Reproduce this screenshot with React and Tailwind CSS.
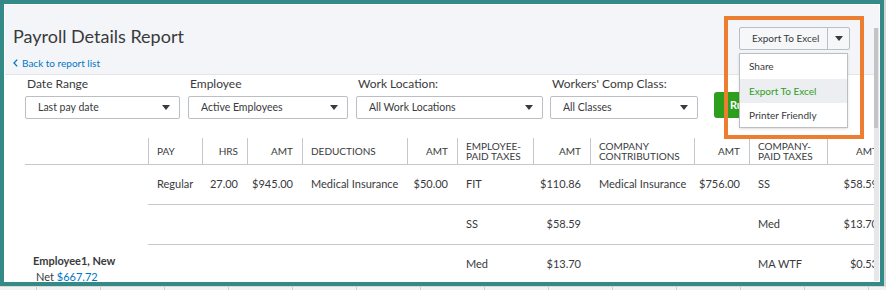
import React from 'react';

const filters = [
  { label: 'Date Range', value: 'Last pay date', width: 'w-[155px]' },
  { label: 'Employee', value: 'Active Employees', width: 'w-[160px]' },
  { label: 'Work Location:', value: 'All Work Locations', width: 'w-[187px]' },
  { label: "Workers' Comp Class:", value: 'All Classes', width: 'w-[148px]' },
];

const columns = [
  { label: 'PAY', align: 'left' },
  { label: 'HRS', align: 'right' },
  { label: 'AMT', align: 'right' },
  { label: 'DEDUCTIONS', align: 'left' },
  { label: 'AMT', align: 'right' },
  { label: ['EMPLOYEE-', 'PAID TAXES'], align: 'left' },
  { label: 'AMT', align: 'right' },
  { label: ['COMPANY', 'CONTRIBUTIONS'], align: 'left' },
  { label: 'AMT', align: 'right' },
  { label: ['COMPANY-', 'PAID TAXES'], align: 'left' },
  { label: 'AMT', align: 'right' },
];

const rows = [
  ['Regular', '27.00', '$945.00', 'Medical Insurance', '$50.00', 'FIT', '$110.86', 'Medical Insurance', '$756.00', 'SS', '$58.59'],
  ['', '', '', '', '', 'SS', '$58.59', '', '', 'Med', '$13.70'],
  ['', '', '', '', '', 'Med', '$13.70', '', '', 'MA WTF', '$0.53'],
];

const Caret = ({ className = '' }) => (
  <svg width="8" height="5" viewBox="0 0 8 5" className={className}>
    <path d="M0 0h8L4 5z" fill="#393a3d" />
  </svg>
);

const Select = ({ value, width }) => (
  <div className={`${width} h-[23px] bg-white border border-[#babec5] rounded-[2px] flex items-center justify-between pl-[12px] pr-[9px]`}>
    <span className="text-[10.5px] text-[#393a3d]">{value}</span>
    <Caret />
  </div>
);

const HeaderCell = ({ col, first }) => {
  const lines = Array.isArray(col.label) ? col.label : [col.label];
  return (
    <div
      className={`h-[27px] border-b border-[#c4c8ce] flex items-center px-[9px] ${first ? '' : ''} ${
        col.align === 'right' ? 'justify-end text-right' : 'justify-start'
      }`}
    >
      <div className="h-[26px] flex flex-col justify-center text-[10px] leading-[10.5px] text-[#393a3d] whitespace-nowrap">
        {lines.map((l) => (
          <span key={l}>{l}</span>
        ))}
      </div>
    </div>
  );
};

export default function App() {
  return (
    <div className="w-[886px] h-[290px] overflow-hidden bg-[#ededed] relative font-[family-name:Lato,sans-serif]">
      <div className="flex">
        {/* pasted screenshot frame */}
        <div className="w-[884px] h-[286px] border-[4px] border-[#348a87] bg-white">
          <div className="h-full border border-white flex overflow-hidden">
            <div className="w-[869px] flex flex-col overflow-hidden">
              {/* page header */}
              <div className="h-[70px] shrink-0 bg-[#f4f5f8] border-b border-[#e3e5e9] pl-[8px] pt-[20px]">
                <h1 className="text-[18px] leading-[22px] text-[#393a3d] whitespace-nowrap">Payroll Details Report</h1>
                <div className="mt-[9px] flex items-center gap-[4px] text-[10px] leading-[14px] text-[#0077c5]">
                  <svg width="5" height="8" viewBox="0 0 5 8">
                    <path d="M4.2 0.6L1 4l3.2 3.4" fill="none" stroke="#0077c5" strokeWidth="1.3" />
                  </svg>
                  <span>Back to report list</span>
                </div>
              </div>

              {/* filters */}
              <div className="pl-[20px] pt-[1px] flex items-end">
                {filters.map((f, i) => (
                  <div key={f.label} className={`flex flex-col ${i === 0 ? '' : i === 3 ? 'ml-[7px]' : 'ml-[8px]'}`}>
                    <span className="pl-[2px] text-[12px] leading-[16px] text-[#393a3d] mb-[4px] whitespace-nowrap">{f.label}</span>
                    <Select value={f.value} width={f.width} />
                  </div>
                ))}
                <button className="ml-[16px] mb-[1px] h-[26px] w-[70px] rounded-[3px] bg-[#2ca01c] text-white text-[11px] font-bold text-left pl-[16px]">
                  Run report
                </button>
              </div>

              {/* table */}
              <div className="mt-[19px] ml-[20px] grid grid-cols-[123px_54px_45px_55px_105px_50px_76px_57px_104px_55px_78px_60px]">
                <div className="h-[27px] border-b border-[#c4c8ce]" />
                {columns.map((c, i) => (
                  <div key={i} className="relative">
                    <div className="absolute left-0 top-0 h-[26px] w-px bg-[#c4c8ce]" />
                    <HeaderCell col={c} />
                  </div>
                ))}

                {rows.map((r, ri) => (
                  <React.Fragment key={ri}>
                    {ri === 2 ? (
                      <div className="h-[40px] pl-[8px] pt-[9px] text-[11px] leading-[14px] text-[#393a3d] whitespace-nowrap">
                        <div className="font-bold">Employee1, New</div>
                        <div className="pl-[3px] mt-[2px]">
                          Net <span className="text-[#0077c5]">$667.72</span>
                        </div>
                      </div>
                    ) : (
                      <div className="h-[40px]" />
                    )}
                    {r.map((cell, ci) => (
                      <div
                        key={ci}
                        className={`h-[40px] border-b border-[#c4c8ce] flex items-center px-[9px] text-[11px] text-[#393a3d] whitespace-nowrap ${
                          columns[ci].align === 'right' ? 'justify-end' : 'justify-start'
                        }`}
                      >
                        {cell}
                      </div>
                    ))}
                  </React.Fragment>
                ))}
              </div>
            </div>

            {/* scrollbar */}
            <div className="w-[5px] bg-[#e6e7e9] flex flex-col">
              <div className="h-[23px] bg-[#f4f5f8]" />
              <div className="w-[4px] h-[100px] bg-[#c3c4c6]" />
            </div>
          </div>
        </div>
        <div className="w-[2px] h-[286px] bg-[#d6d6d6]" />
      </div>

      {/* spreadsheet grid below */}
      <div className="h-[4px] flex bg-[#f3f3f3] border-t border-[#d9d9d9]">
        <div className="w-[36px] shrink-0" />
        {Array.from({ length: 14 }).map((_, i) => (
          <div key={i} className="w-[64px] shrink-0 border-l border-[#d0d0d0]" />
        ))}
      </div>

      {/* export dropdown */}
      <div className="absolute left-[739px] top-[27px] w-[111px] h-[23px] flex border border-[#babec5] rounded-[2px] bg-[#f6f7f9]">
        <div className="w-[88px] border-r border-[#babec5] flex items-center pl-[12px] text-[10px] text-[#393a3d] whitespace-nowrap">
          Export To Excel
        </div>
        <div className="flex-1 flex items-center justify-center">
          <Caret />
        </div>
      </div>

      <div className="absolute left-[739px] top-[53px] w-[109px] h-[75px] bg-white border border-[#babec5] shadow-sm flex flex-col text-[10px] text-[#393a3d]">
        <div className="h-[25px] flex items-center pl-[9px]">Share</div>
        <div className="h-[24px] flex items-center pl-[9px] bg-[#eceef1] text-[#2ca01c]">Export To Excel</div>
        <div className="h-[24px] flex items-center pl-[9px]">Printer Friendly</div>
      </div>

      {/* annotation box */}
      <div className="absolute left-[724px] top-[16px] w-[140px] h-[123px] border-[4px] border-[#ed7d31]" />
    </div>
  );
}
